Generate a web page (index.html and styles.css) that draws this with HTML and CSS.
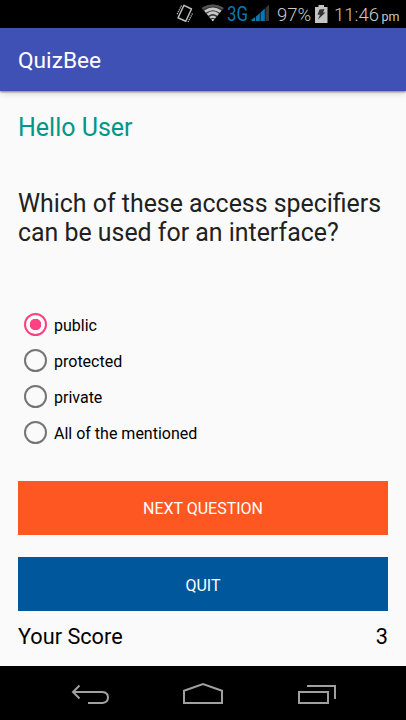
FILE: index.html
```html
<!DOCTYPE html>
<html lang="en">
<head>
<meta charset="utf-8">
<title>QuizBee</title>
<link rel="stylesheet" href="styles.css">
</head>
<body>
<div class="status-bar">
  <svg class="status-icons" width="100" height="28" viewBox="0 0 100 28">
    <g fill="none" stroke="#bdbdbd" stroke-width="1.5" stroke-linejoin="round">
      <path d="M13 5.300L20.500 9L14.800 21.300L7 17.800Z"/>
      <path d="M10.500 5.500L6 14.500M21.500 13.500L17 22" stroke-width="1.200" stroke-dasharray="1.300 .8"/>
    </g>
    <path d="M30.500 8.200Q41.500 .8 53 8.200L41.800 21.500Z" fill="#383838"/>
    <g fill="none" stroke="#c8c8c8" stroke-width="2.600">
      <path d="M31.500 8.500Q41.800 2.300 52 8.500" stroke="#555" stroke-width="2"/>
      <path d="M34 11.600Q41.800 6 49.600 11.600"/>
      <path d="M36.500 14.800Q41.800 10.600 47.100 14.800"/>
      <path d="M39 17.800Q41.800 15.600 44.600 17.800" stroke-width="2"/>
    </g>
    <path d="M40.300 19.500Q41.800 18.500 43.300 19.500L41.800 21.300Z" fill="#ddd"/>
    <text class="network" x="56" y="21" textLength="21" lengthAdjust="spacingAndGlyphs">3G</text>
    <path d="M80.500 21V19.500L84.200 17V21ZM85 21V16.500L88.800 13V21ZM89.500 21V12.500L93.800 8.500V21Z" fill="#0878b0"/>
    <path d="M94.500 21V8L98 4.500V21Z" fill="#383838"/>
  </svg>
  <span class="percent">97%</span>
  <svg class="battery" width="13" height="18" viewBox="0 0 13 18">
    <path d="M3.500 0H9V2H12.500V18H0V2H3.500Z" fill="#c4c4c4"/>
    <path d="M4.500 4.500L9.500 4L8 7.500H10.500L3 14.500L5 9.800H2.500Z" fill="#333"/>
  </svg>
  <span class="clock">11:46</span><span class="meridiem">pm</span>
</div>
<header class="app-bar"><h1>QuizBee</h1></header>
<main class="quiz">
  <p class="greeting">Hello User</p>
  <h2 class="question">Which of these access specifiers<br>can be used for an interface?</h2>
  <div class="options">
    <label class="option"><input type="radio" name="answer" checked><span>public</span></label>
    <label class="option"><input type="radio" name="answer"><span>protected</span></label>
    <label class="option"><input type="radio" name="answer"><span>private</span></label>
    <label class="option"><input type="radio" name="answer"><span>All of the mentioned</span></label>
  </div>
  <button class="button next">NEXT QUESTION</button>
  <button class="button quit">QUIT</button>
  <div class="score"><span>Your Score</span><span>3</span></div>
</main>
<nav class="nav-bar">
  <svg width="406" height="54" viewBox="0 0 406 54" fill="none" stroke="#a0a0a0" stroke-width="2">
    <path d="M79.500 19.500L73 26L79.500 32.500M73 26H102.500Q108 26.500 108 31.500T102.500 37H88"/>
    <path d="M184 37V24.800L203 18L222 24.800V37Z"/>
    <path d="M299 26H328V37H299ZM307 20H335V33"/>
  </svg>
</nav>
</body>
</html>
```
FILE: styles.css
```css
* { box-sizing: border-box; }
body {
  margin: 0;
  width: 406px;
  height: 720px;
  display: flex;
  flex-direction: column;
  overflow: hidden;
  background: #fafafa;
  color: #000;
  font-family: Roboto, "Liberation Sans", sans-serif;
}
h1, h2, p { margin: 0; font-weight: 400; }
.status-bar {
  height: 28px;
  flex: none;
  display: flex;
  align-items: flex-start;
  padding-left: 171px;
  background: #000;
  color: #c8c8c8;
  line-height: 28px;
  white-space: nowrap;
}
.status-icons { flex: none; }
.network { font-size: 20px; fill: #0878b0; }
.percent { width: 38px; margin-left: 6px; font-size: 18.500px; font-weight: 300; line-height: 30px; }
.battery { flex: none; margin: 5px 6px 0 0; }
.clock { width: 47.500px; font-size: 18.500px; font-weight: 300; line-height: 30px; }
.meridiem { font-size: 12.500px; line-height: 33px; }
.app-bar {
  height: 63px;
  flex: none;
  padding-left: 18px;
  background: #3f51b5;
  color: #fff;
  box-shadow: 0 1px 2px rgba(0,0,0,.45), 0 3px 6px rgba(0,0,0,.12);
}
h1 { font-size: 22.700px; line-height: 66px; }
.quiz { height: 575px; flex: none; padding: 22px 18px 0; }
.greeting { height: 76px; font-size: 25px; line-height: 30px; color: #009688; }
.question { height: 118px; font-size: 24.900px; line-height: 29px; color: #212121; white-space: nowrap; }
.options { height: 174px; }
.option { height: 36px; display: flex; align-items: center; gap: 6.500px; padding-left: 6.500px; font-size: 16px; }
.option input {
  appearance: none;
  width: 23px;
  height: 23px;
  margin: 0 .500px 1px -.500px;
  border: 2px solid #757575;
  border-radius: 50%;
}
.option input:checked {
  border-color: #ff4081;
  background: radial-gradient(circle, #ff4081 5.500px, transparent 6px);
}
.button {
  display: block;
  width: 100%;
  height: 54px;
  border: 0;
  padding: 1px 0 0;
  color: #fff;
  font: 400 16px Roboto, "Liberation Sans", sans-serif;
}
.next { margin-bottom: 22.400px; background: #ff5722; }
.quit { padding-top: 2px; background: #01579b; }
.score { display: flex; justify-content: space-between; font-size: 21.700px; line-height: 52px; }
.nav-bar { height: 54px; flex: none; background: #000; }
.nav-bar svg { display: block; }
```
